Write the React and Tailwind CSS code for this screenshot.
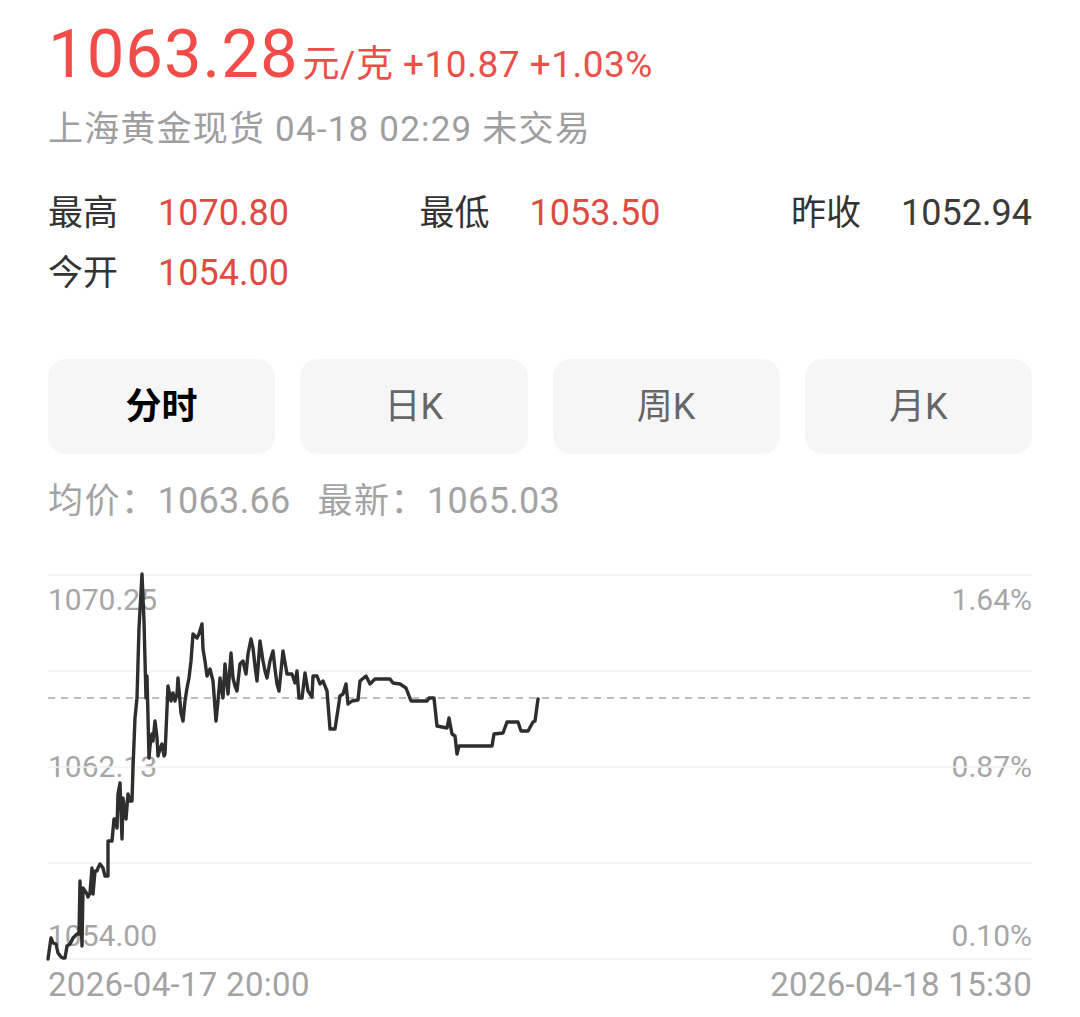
import React from "react";

const PTS = [
  [48,958],[51,937],[53,942],[56,943],[58,952],[61,956],[63,957],[65,957],[67,945],[70,943],[73,937],[75,935],[77,933],[79,933],
  [80,880],[82,945],[83,887],[85,890],[87,893],[88,896],[90,892],[92,867],[93,893],[95,870],[97,870],[98,867],[100,863],[103,867],
  [105,875],[108,875],[108,840],[112,840],[114,818],[116,818],[117,827],[118,793],[120,782],[122,838],[123,797],[125,812],[126,818],
  [128,793],[130,800],[132,800],[133,767],
  [135,717],[137,697],[139,627],[142,573],[144,620],[146,697],[147,675],[149,757],[150,745],[152,733],[153,740],[155,720],[157,737],
  [158,755],[160,748],[162,743],[164,755],[165,753],[168,685],[171,700],[173,692],[175,700],[177,693],[178,677],[181,712],[183,720],
  [185,700],[187,687],[189,677],[191,660],[193,633],[197,637],[199,633],[202,623],[203,648],[205,660],[207,675],[210,668],[213,680],
  [216,720],[218,700],[220,677],[223,697],[225,663],[228,693],[231,652],[233,677],[235,685],[237,690],[240,663],[243,660],[246,673],
  [248,653],[251,638],[253,647],[255,665],[257,680],[260,640],[263,660],[265,670],[267,677],[270,660],[273,650],[275,668],[277,683],
  [279,690],[283,650],[287,673],[292,673],[295,682],[297,670],[299,697],[302,697],[305,672],[308,690],[312,696],[313,675],[317,675],
  [320,683],[323,680],[327,690],[330,728],[335,728],[340,695],[343,693],[346,683],[348,703],[352,700],[358,699],[360,680],[366,675],
  [370,683],[375,678],[390,678],[393,682],[400,683],[406,687],[411,700],[427,700],[429,697],[434,697],[437,725],[447,727],[449,717],
  [452,733],[455,735],[457,753],[459,745],[492,745],[494,733],[503,732],[507,721],[518,721],[521,730],[528,730],[533,721],[535,720],
  [538,698],
];

function Stat({ label, value, valueClass }) {
  return (
    <div className="flex items-center">
      <span className="w-[110px] text-[35px] leading-none text-[#333333]">{label}</span>
      <span className={"text-[36px] leading-none " + valueClass}>{value}</span>
    </div>
  );
}

export default function App() {
  const points = PTS.map((p) => p.join(",")).join(" ");
  return (
    <div className="w-[1080px] h-[1017px] overflow-hidden bg-white px-12 pt-[21px] font-[Roboto,'Noto_Sans_CJK_SC',sans-serif]">
      {/* price */}
      <div className="flex items-baseline">
        <span className="text-[67px] leading-none tracking-[1px] text-[#f14c47]">1063.28</span>
        <span className="ml-[4px] text-[37px] leading-none text-[#ea4f4a] tracking-[0.5px]">元/克 +10.87 +1.03%</span>
      </div>
      <div className="mt-[24px] text-[35px] leading-none tracking-[1.2px] text-[#9e9e9e]">上海黄金现货 04-18 02:29 未交易</div>

      {/* stats */}
      <div className="mt-[36px] flex h-[60px] items-center justify-between">
        <Stat label="最高" value="1070.80" valueClass="text-[#e04a42]" />
        <Stat label="最低" value="1053.50" valueClass="text-[#e04a42]" />
        <Stat label="昨收" value="1052.94" valueClass="text-[#3a3a3a]" />
      </div>
      <div className="flex h-[60px] items-center">
        <Stat label="今开" value="1054.00" valueClass="text-[#e04a42]" />
      </div>

      {/* tabs */}
      <div className="mt-[56px] grid grid-cols-4 gap-[25px]">
        <div className="flex h-[95px] items-center justify-center rounded-[18px] bg-[#f6f6f6] text-[36px] font-bold text-black">分时</div>
        <div className="flex h-[95px] items-center justify-center rounded-[18px] bg-[#f6f6f6] text-[36px] text-[#666666]">日K</div>
        <div className="flex h-[95px] items-center justify-center rounded-[18px] bg-[#f6f6f6] text-[36px] text-[#666666]">周K</div>
        <div className="flex h-[95px] items-center justify-center rounded-[18px] bg-[#f6f6f6] text-[36px] text-[#666666]">月K</div>
      </div>

      {/* averages */}
      <div className="mt-[22px] flex h-[50px] items-center gap-[27px] text-[#a3a3a3]">
        <div className="flex items-center">
          <span className="text-[35px] leading-none tracking-[1.5px]">均价：</span>
          <span className="text-[36px] leading-none tracking-[0.3px]">1063.66</span>
        </div>
        <div className="flex items-center">
          <span className="text-[35px] leading-none tracking-[1.5px]">最新：</span>
          <span className="text-[36px] leading-none tracking-[0.3px]">1065.03</span>
        </div>
      </div>

      {/* chart */}
      <div className="relative mt-[49px] h-[384px]">
        <span className="absolute left-0 top-[10px] text-[30px] leading-none text-[#a6a6a6]">1070.25</span>
        <span className="absolute left-0 top-[177px] text-[30px] leading-none text-[#a6a6a6]">1062.13</span>
        <span className="absolute left-0 top-[346px] text-[30px] leading-none text-[#a6a6a6]">1054.00</span>
        <span className="absolute right-0 top-[10px] text-[30px] leading-none text-[#a6a6a6]">1.64%</span>
        <span className="absolute right-0 top-[177px] text-[30px] leading-none text-[#a6a6a6]">0.87%</span>
        <span className="absolute right-0 top-[346px] text-[30px] leading-none text-[#a6a6a6]">0.10%</span>
        <svg
          className="absolute inset-0 overflow-visible"
          width="984"
          height="384"
          viewBox="48 574 984 384"
        >
          {[574, 670, 766, 862, 958].map((y) => (
            <line key={y} x1="48" x2="1032" y1={y} y2={y} stroke="#f0f0f0" strokeWidth="1.5" />
          ))}
          <line x1="48" x2="1032" y1="697" y2="697" stroke="#a8a8a8" strokeWidth="1.5" strokeDasharray="7 6" />
          <polyline points={points} fill="none" stroke="#2e2e2e" strokeWidth="3.4" strokeLinejoin="round" strokeLinecap="round" />
        </svg>
      </div>

      {/* time axis */}
      <div className="flex h-[50px] items-center justify-between text-[33px] leading-none tracking-[0.3px] text-[#a3a3a3]">
        <span>2026-04-17 20:00</span>
        <span>2026-04-18 15:30</span>
      </div>
    </div>
  );
}
